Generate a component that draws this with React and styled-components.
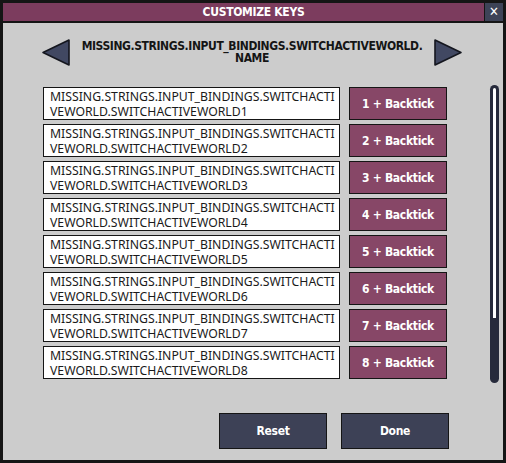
import styled, { createGlobalStyle } from "styled-components";

const GlobalStyle = createGlobalStyle`
  html, body {
    margin: 0;
    padding: 0;
    background: #151515;
  }
`;

const gameFont = `"DejaVu Sans Condensed", "DejaVu Sans", sans-serif`;

const rows = [1, 2, 3, 4, 5, 6, 7, 8];

function Arrow({ dir }) {
  const points = dir === "left" ? "27,1 27,26 1,13.5" : "1,1 1,26 27,13.5";
  return (
    <svg width="28" height="27" viewBox="0 0 28 27">
      <polygon points={points} fill="#414862" stroke="#14161e" strokeWidth="1.6" strokeLinejoin="round" />
    </svg>
  );
}

function App() {
  return (
    <>
      <GlobalStyle />
      <Window>
        <TitleBar>
          <Title>CUSTOMIZE KEYS</Title>
          <CloseButton>✕</CloseButton>
        </TitleBar>
        <Body>
          <Header>
            <Arrow dir="left" />
            <HeaderText>
              MISSING.STRINGS.INPUT_BINDINGS.SWITCHACTIVEWORLD.
              <br />
              NAME
            </HeaderText>
            <Arrow dir="right" />
          </Header>
          <Content>
            <List>
              {rows.map((n) => (
                <Row key={n}>
                  <Label>
                    <LabelLine>MISSING.STRINGS.INPUT_BINDINGS.SWITCHACTI</LabelLine>
                    <LabelLine>VEWORLD.SWITCHACTIVEWORLD{n}</LabelLine>
                  </Label>
                  <KeyButton>{n} + Backtick</KeyButton>
                </Row>
              ))}
            </List>
            <ScrollTrack>
              <ScrollRail />
            </ScrollTrack>
          </Content>
          <Footer>
            <ActionButton>Reset</ActionButton>
            <ActionButton>Done</ActionButton>
          </Footer>
        </Body>
      </Window>
    </>
  );
}

const Window = styled.div`
  margin: 3px;
  width: 500px;
  height: 457px;
  display: flex;
  flex-direction: column;
  background: #cccccc;
`;

const TitleBar = styled.div`
  display: flex;
  height: 18px;
  gap: 1px;
  background: #151515;
  border-bottom: 2px solid #151515;
`;

const Title = styled.div`
  flex: 1;
  background: #7c3c5e;
  color: #fff;
  font-family: ${gameFont};
  font-weight: bold;
  font-size: 12px;
  letter-spacing: -0.3px;
  line-height: 18px;
  text-align: center;
  padding-left: 20px;
`;

const CloseButton = styled.div`
  width: 18px;
  background: #3d4357;
  color: #fff;
  font-family: ${gameFont};
  font-weight: bold;
  font-size: 13px;
  line-height: 18px;
  text-align: center;
`;

const Body = styled.div`
  flex: 1;
  display: flex;
  flex-direction: column;
`;

const Header = styled.div`
  height: 58px;
  display: flex;
  align-items: center;
  justify-content: space-between;
  padding: 0 41px 0 39px;
`;

const HeaderText = styled.div`
  text-align: center;
  color: #151515;
  font-family: ${gameFont};
  font-weight: bold;
  font-size: 12px;
  line-height: 12.5px;
  letter-spacing: -0.4px;
`;

const Content = styled.div`
  display: flex;
  margin-top: 4px;
  padding-left: 40px;
`;

const List = styled.div`
  display: flex;
  flex-direction: column;
  gap: 4px;
  padding-top: 2px;
`;

const Row = styled.div`
  display: flex;
  gap: 9px;
  height: 33px;
`;

const Label = styled.div`
  width: 289px;
  padding: 0 0 0 6px;
  background: #fff;
  border: 1px solid #151515;
  display: flex;
  flex-direction: column;
  justify-content: center;
  overflow: hidden;
`;

const LabelLine = styled.div`
  color: #1a1a1a;
  font-family: "Noto Sans", sans-serif;
  font-size: 12.25px;
  line-height: 15px;
  white-space: nowrap;
`;

const KeyButton = styled.div`
  width: 96px;
  background: #874767;
  border: 1px solid #151515;
  color: #fff;
  font-family: ${gameFont};
  font-weight: bold;
  font-size: 12px;
  letter-spacing: -0.3px;
  display: flex;
  align-items: center;
  justify-content: center;
`;

const ScrollTrack = styled.div`
  margin-left: 43px;
  width: 9px;
  height: 298px;
  border-radius: 5px;
  background: #262a3b;
  padding: 3px 3px 0;
  box-sizing: border-box;
`;

const ScrollRail = styled.div`
  width: 3px;
  height: 230px;
  background: #fff;
  border-radius: 2px 2px 0 0;
`;

const Footer = styled.div`
  display: flex;
  justify-content: flex-end;
  gap: 14px;
  padding: 30px 54px 0 0;
`;

const ActionButton = styled.div`
  width: 106px;
  height: 34px;
  background: #3d4156;
  border: 1px solid #151515;
  color: #fff;
  font-family: ${gameFont};
  font-weight: bold;
  font-size: 12px;
  letter-spacing: -0.3px;
  display: flex;
  align-items: center;
  justify-content: center;
`;

export default App;
